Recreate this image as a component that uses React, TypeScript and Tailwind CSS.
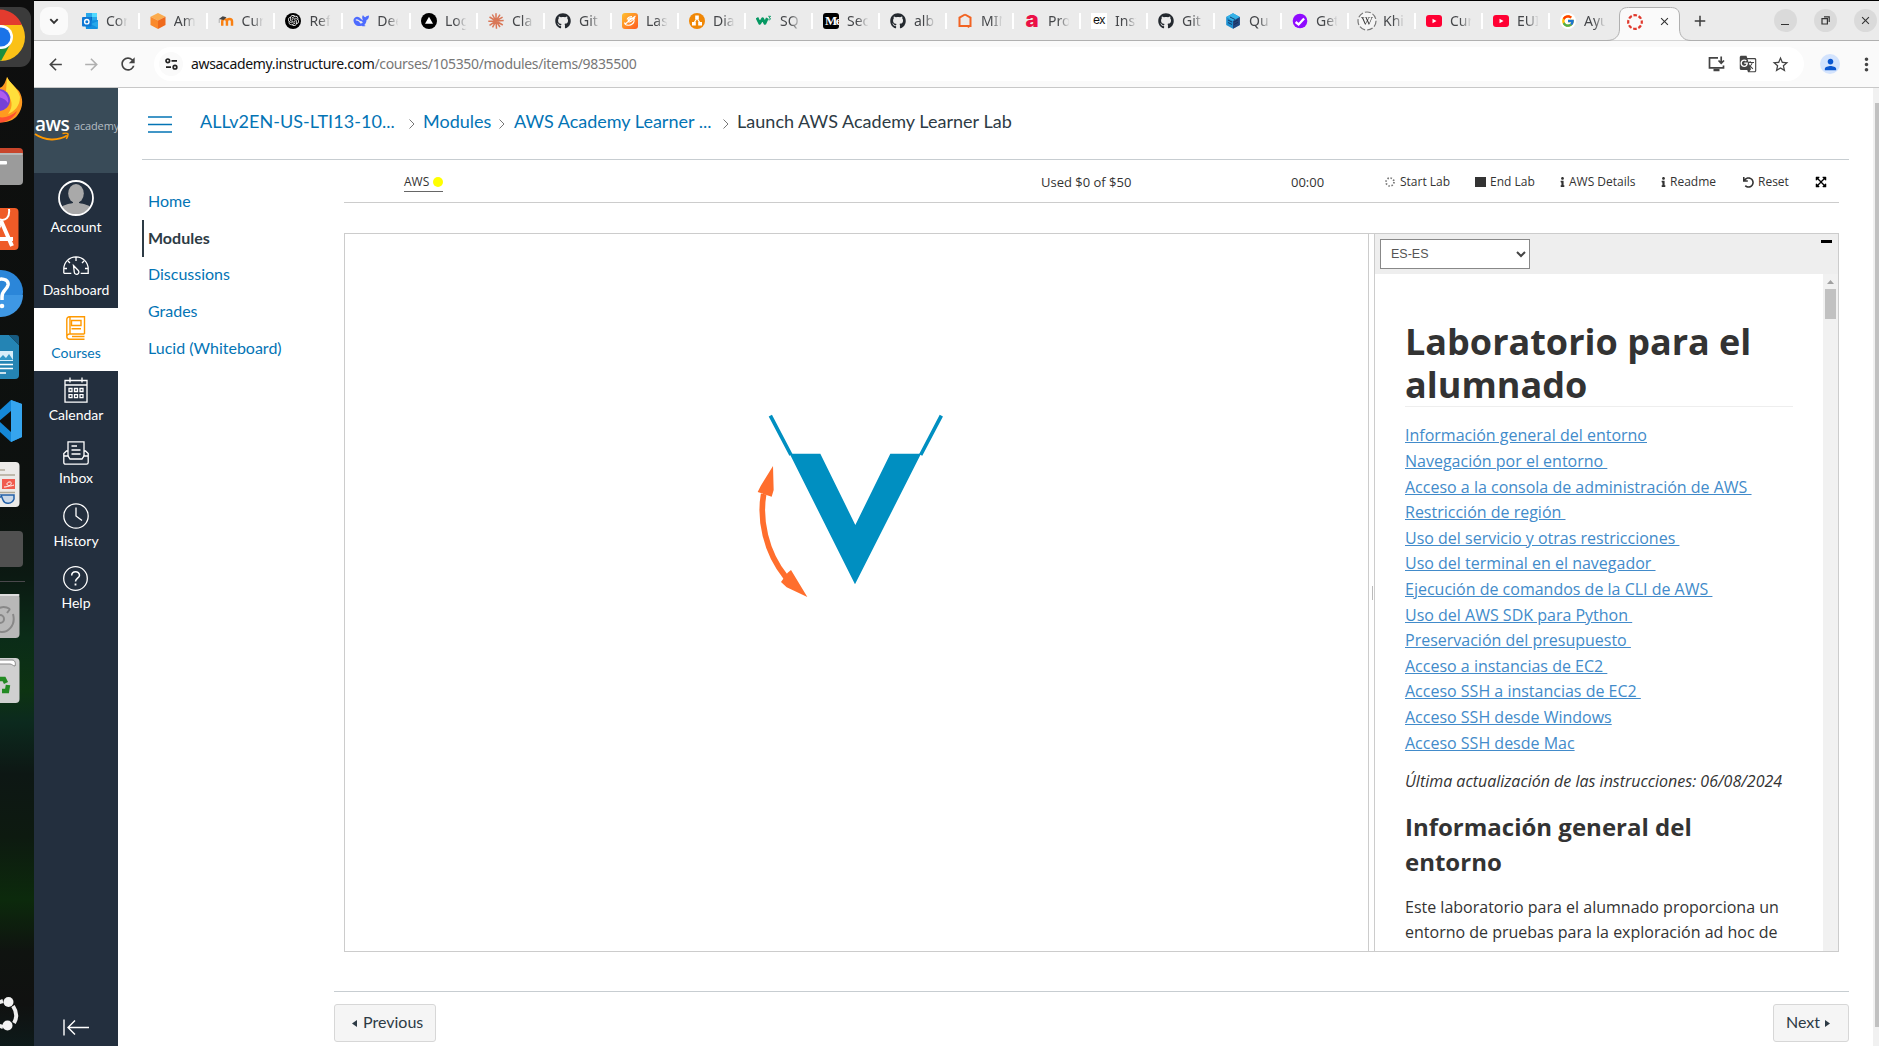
import React from 'react';
import { FaGithub, FaUndo, FaExpandArrowsAlt, FaInfo, FaWikipediaW } from 'react-icons/fa';
import { FcGoogle } from 'react-icons/fc';
import { SiOpenai } from 'react-icons/si';
import { MdArrowBack, MdArrowForward, MdRefresh, MdStarBorder, MdGTranslate, MdPerson, MdClose, MdAdd, MdMoreVert } from 'react-icons/md';

/* ---------- favicons ---------- */
const Outlook = () => (
  <svg width="16" height="16" viewBox="0 0 16 16">
    <path d="M4 0h11v9H4z" fill="#28a8ea" /><path d="M10 0h5v4h-5z" fill="#50d9ff" /><path d="M4 4h6v5H4z" fill="#0364b8" />
    <path d="M3 8l13-1v8a1 1 0 0 1-1 1H4z" fill="#1490df" /><path d="M16 8v7L9 11z" fill="#28a8ea" />
    <rect y="4" width="9.5" height="9.5" rx="1" fill="#0f78d4" /><circle cx="4.8" cy="8.7" r="2.2" fill="none" stroke="#fff" strokeWidth="1.4" />
  </svg>
);
const Cube = () => (
  <svg width="16" height="16" viewBox="0 0 16 16">
    <path d="M8 0l7.5 3.7L8 7.6.5 3.7z" fill="#fbac4f" /><path d="M.5 3.7L8 7.6V16L.5 12z" fill="#fa8a2c" /><path d="M15.5 3.7L8 7.6V16l7.5-4z" fill="#ef6a1c" />
  </svg>
);
const Moodle = () => (
  <svg width="17" height="16" viewBox="0 0 17 16" fill="none">
    <path d="M4.5 13V8.5a2.2 2.2 0 0 1 5 0V13m0-4.5a2.4 2.4 0 0 1 5.4 0V13" stroke="#f98012" strokeWidth="2.6" />
    <path d="M1 6l4-3 4 1-3 3z" fill="#444" /><path d="M1.3 6v4" stroke="#999" strokeWidth=".8" />
  </svg>
);
const OpenAi = () => <span className="flex h-4 w-4 items-center justify-center rounded-full bg-black text-white"><SiOpenai size={11} /></span>;
const Deepseek = () => (
  <svg width="17" height="14" viewBox="0 0 17 14">
    <path d="M.5 6C1 3 4 1.6 6.4 3c1.500 .9 3 2.600 4.200 3.600C9.500 4 9.500 2 10.700.7c.5 1.500 1.500 2 2.500 2.300C14 2 15.500 1.400 17 1.200c0 2.500-1 4.300-2.600 4.800-.2 2.600-1.200 4.300-2.500 5.300.5.500 1 .7 1.600 1-2 .7-3.400.3-4.500-.3C5 13.500.5 11 .5 6z" fill="#4d6bfe" />
    <path d="M3 6c2-.6 4 1 5.800 3.500M8 7.200l2 1.600" stroke="#ebebeb" strokeWidth="1.300" fill="none" />
  </svg>
);
const Vercel = () => (
  <svg width="16" height="16" viewBox="0 0 16 16"><circle cx="8" cy="8" r="8" /><path d="M8 3.800l4 6.900H4z" fill="#fff" /></svg>
);
const Claude = () => (
  <svg width="16" height="16" viewBox="0 0 16 16" stroke="#d97757" strokeWidth="1.500">
    <path d="M8 8V.3M8 8l4-6.300M8 8l6.600-3.800M8 8l7.700-.4M8 8l6.800 4M8 8l4 6M8 8l.5 7.800M8 8l-3.500 6.300M8 8l-6.500 4.300M8 8L.3 8.300M8 8L1.500 4M8 8L4.300 1.500" />
  </svg>
);
const Github = () => <FaGithub size={16} color="#24292f" />;
const Lastfm = () => (
  <svg width="16" height="16" viewBox="0 0 16 16">
    <defs><linearGradient id="lg" x2="1" y2="1"><stop stopColor="#ffc02e" /><stop offset="1" stopColor="#ff5a1f" /></linearGradient></defs>
    <rect width="16" height="16" rx="3" fill="url(#lg)" />
    <path d="M2.500 9.500c.5 4 8 3.500 9.500-1 .8-3-2-4-4-3S5.500 9 7.500 9s3-2 5.500-4.500M3 11.500C5 9 8 7 13.500 3M5 6.500c1-2 3-3 5-3" fill="none" stroke="#fff" strokeWidth="1.100" />
  </svg>
);
const Drawio = () => (
  <svg width="16" height="16" viewBox="0 0 16 16">
    <circle cx="8" cy="8" r="8" fill="#f08705" /><path d="M8 5L5 10M8 5l3 5" stroke="#fff" strokeWidth="1.300" />
    <path d="M6.200 2.500h3.600v3.600H6.200zM3 9h3.800v3.400H3zM9.200 9H13v3.400H9.200z" fill="#fff" />
  </svg>
);
const W3 = () => (
  <svg width="17" height="12" viewBox="0 0 17 12" fill="none" stroke="#059862">
    <path d="M1 2.500l3 6 3-5 2.500 5L12 3" strokeWidth="3" strokeLinejoin="round" /><path d="M13 1h2.500L14 2.700c2 0 2 2.500-.8 2" strokeWidth="1" />
  </svg>
);
const Medium = () => <span className="flex h-4 w-4 items-center overflow-hidden rounded-[3px] bg-black pl-0.5 font-['Liberation_Serif',serif] text-[13px] leading-4 font-bold tracking-[-1.500px] text-white">Me</span>;
const Minecraft = () => (
  <svg width="16" height="16" viewBox="0 0 16 16" fill="none"><path d="M8 1.500l5.500 3.200V13H11l1 1.500M8 1.500L2.500 4.700V13h9" stroke="#f26322" strokeWidth="2" /></svg>
);
const LetterA = () => <span className="flex h-4 w-4 items-center justify-center font-['Inter',sans-serif] text-[22px] leading-none font-black text-[#eb1046]"><span className="-mt-1">a</span></span>;
const Ex = () => <span className="flex h-4 w-4 items-center justify-center bg-white font-['Inter',sans-serif] text-[12px] leading-none tracking-tighter text-[#111]"><span className="-mt-0.5">ex</span></span>;
const Hex = () => (
  <svg width="16" height="16" viewBox="0 0 16 16">
    <path d="M8 .3l6.800 3.800v7.800L8 15.700l-6.800-3.800V4.100z" fill="#1d8fd0" /><path d="M8 .3l6.800 3.800L8 8 1.200 4.100z" fill="#35b2e8" /><path d="M14.800 4.100v7.800L8 15.700V8z" fill="#24447c" />
    <path d="M3 7l4 2M3 9.500l4 2M9 9l4-2.200M9 11.500l4-2.200M5 4l5 2.500" stroke="#12305c" strokeWidth=".9" />
  </svg>
);
const Check = () => (
  <svg width="16" height="16" viewBox="0 0 16 16"><circle cx="8" cy="8" r="7.300" fill="#8f0aff" /><path d="M3.600 9l3 2.500 5.500-6" stroke="#fff" strokeWidth="2.300" fill="none" /></svg>
);
const Wiki = () => (
  <span className="relative flex h-5 w-5 shrink-0 items-center justify-center text-[#333]">
    <svg className="absolute inset-0" width="20" height="20" viewBox="0 0 20 20"><circle cx="10" cy="10" r="9" fill="#f5f5f5" stroke="#777" strokeWidth="1.200" strokeDasharray="6 2" /></svg>
    <FaWikipediaW size={12} className="relative" />
  </span>
);
const Youtube = () => (
  <svg width="16" height="12" viewBox="0 0 16 12"><rect width="16" height="12" rx="3" fill="#ff0033" /><path d="M6.500 3.700v4.600l4-2.300z" fill="#fff" /></svg>
);
const Google = () => <span className="flex h-4 w-4 items-center justify-center rounded-full bg-white"><FcGoogle size={14} /></span>;

const tabs: [React.FC, string][] = [
  [Outlook, 'Cor'], [Cube, 'Am'], [Moodle, 'Cur'], [OpenAi, 'Ref'], [Deepseek, 'Dee'], [Vercel, 'Log'], [Claude, 'Cla'], [Github, 'Git'],
  [Lastfm, 'Las'], [Drawio, 'Dia'], [W3, 'SQ'], [Medium, 'Sec'], [Github, 'alb'], [Minecraft, 'MIN'], [LetterA, 'Pro'], [Ex, 'Inst'],
  [Github, 'Git'], [Hex, 'Qu'], [Check, 'Get'], [Wiki, 'Khi'], [Youtube, 'Cur'], [Youtube, 'EUI'], [Google, 'Ayu'],
];

function TabStrip() {
  return (
    <div className="flex h-[40px] shrink-0 border-b border-[#b0b0b0] bg-[#ebebeb]">
      <div className="mt-1.5 ml-1.5 flex h-7 w-7 shrink-0 items-center justify-center rounded-[9px] bg-[#fafafa]">
        <svg width="10" height="7" viewBox="0 0 10 7" fill="none" stroke="#333" strokeWidth="1.900"><path d="M1.300 1.200L5 5l3.700-3.800" /></svg>
      </div>
      <div className="ml-[4px] flex">
        {tabs.map(([Icon, label], i) => (
          <div key={i} className={`${i < 5 ? 'w-[67.800px]' : 'w-[67px]'} relative flex h-full shrink-0 items-center pl-[10px]`}>
            <span className="flex w-4 shrink-0 justify-center"><Icon /></span>
            <span className="ml-2 w-[22px] overflow-hidden font-['Noto_Sans',sans-serif] text-[14px] whitespace-nowrap text-[#45474a] [mask-image:linear-gradient(to_right,black_45%,transparent_98%)]">{label}</span>
            {i < 22 && <span className="absolute top-3 right-0 h-4 w-0.5 bg-white" />}
          </div>
        ))}
      </div>
      <div className="relative -ml-[10px] h-[40px] w-[84px] shrink-0">
        <svg className="absolute inset-0" width="84" height="40" viewBox="0 0 84 40">
          <path d="M0 39.500C8 39.500 12.500 35 12.500 28V15c0-6 3-8.500 9-8.500h42c6 0 9 2.500 9 8.500v13c0 7 4.500 11.500 11.500 11.500" fill="#fafafa" stroke="#b0b0b0" />
        </svg>
        <div className="relative flex h-full items-center pt-px pl-5">
          <svg width="16" height="16" viewBox="0 0 16 16" fill="none"><circle cx="8" cy="8" r="6.800" stroke="#e0382c" strokeWidth="2.200" strokeDasharray="3.600 1.740" strokeDashoffset="1.800" /></svg>
          <MdClose size={13} color="#333" className="ml-[15px]" />
        </div>
      </div>
      <MdAdd size={18} color="#3c3c3c" className="mt-[11px] shrink-0" />
      <div className="ml-[65px] flex shrink-0 items-center gap-[17px] text-[#333]">
        <span className="flex h-[23px] w-[23px] items-end justify-center rounded-full bg-[#dadada] pb-[7px]"><span className="h-[1.500px] w-2 bg-[#333]" /></span>
        <span className="flex h-[23px] w-[23px] items-center justify-center rounded-full bg-[#dadada]">
          <svg width="9" height="9" viewBox="0 0 9 9" fill="none" stroke="#333" strokeWidth="1.200"><path d="M1 2.600h5.400V8H1zM3 .8h5.200V6" /></svg>
        </span>
        <span className="flex h-[23px] w-[23px] items-center justify-center rounded-full bg-[#dadada]"><MdClose size={13} /></span>
      </div>
    </div>
  );
}

function AddressBar() {
  return (
    <div className="flex h-[47px] shrink-0 items-center overflow-hidden border-b border-[#c8c8c8] bg-[#fafafa] text-[#444]">
      <MdArrowBack size={19} className="ml-[12px] shrink-0" />
      <MdArrowForward size={19} className="ml-[17px] shrink-0 text-[#b0b0b0]" />
      <MdRefresh size={20} className="ml-[17px] shrink-0" />
      <div className="ml-4 flex h-[34px] w-[1650px] shrink-0 items-center rounded-full bg-white pl-[5px]">
        <span className="flex h-6 w-6 items-center justify-center rounded-full bg-[#fafafa]">
          <svg width="13" height="12" viewBox="0 0 13 12" fill="none" stroke="#222" strokeWidth="1.700"><circle cx="2.800" cy="2.800" r="1.800" /><path d="M6.500 2.800H12M1 9.200h5" /><circle cx="10" cy="9.200" r="1.800" /></svg>
        </span>
        <span className="ml-2 w-[445px] pb-0.5 font-['Noto_Sans',sans-serif] text-[14px] tracking-[-0.340px] whitespace-nowrap text-[#777]"><span className="text-[#111]">awsacademy.instructure.com</span>/courses/105350/modules/items/9835500</span>
        <svg className="ml-auto" width="17" height="16" viewBox="0 0 17 16" fill="none" stroke="#444" strokeWidth="1.700"><path d="M10 1.800H1.500v10h14V9.500" /><path d="M13.200.5v6M10.500 4.500l2.700 2.700L16 4.500" /><path d="M5.500 14h6" strokeWidth="2.500" /></svg>
        <MdGTranslate size={18} className="ml-[14px]" />
        <MdStarBorder size={19} className="mr-[14px] ml-[14px]" />
      </div>
      <span className="ml-4 flex h-5 w-5 shrink-0 items-center justify-center rounded-full bg-[#d3e3fd] text-[#0b57d0]"><MdPerson size={17} /></span>
      <MdMoreVert size={21} className="ml-[16px] shrink-0" />
    </div>
  );
}

/* ---------- desktop dock ---------- */
const Tile = ({ children }: { children: React.ReactNode }) => <svg className="shrink-0" width="34" height="64" viewBox="0 0 34 64">{children}</svg>;

function Dock() {
  return (
    <div className="flex h-full w-[34px] shrink-0 flex-col overflow-hidden bg-[linear-gradient(180deg,#0e0e0e_0%,#0d110f_48%,#0b1912_55%,#0b2c18_61%,#0d3312_66%,#0c2a1e_69%,#0d1714_74%,#0d1a10_80%,#0c2a0c_86%,#0f1310_91%,#101110_96%,#0d1a1a_100%)] pt-[5px]">
      <Tile>
        <rect x="-30" y="2" width="61" height="60" rx="11" fill="#3b3b3b" />
        <circle cx="1" cy="32" r="24" fill="#fbc116" /><path d="M-23 20A24 24 0 0 1 21.800 20z" fill="#e33b2e" /><path d="M-20 40L1 56l11-20-12-6z" fill="#1e8e3e" />
        <circle cx="1" cy="32" r="12" fill="#fff" /><circle cx="1" cy="32" r="9.500" fill="#1a73e8" />
      </Tile>
      <Tile>
        <path d="M-10 14C0 22 3 20 7 8c3 6 8 10 12 14 5 8 4 18-2 25-6 7-18 8-27 4z" fill="#ff9a1f" />
        <path d="M7 8c3 7 10 9 13 20 0 9-6 15-12 17 6-8 4-15-2-22z" fill="#ffdf3b" /><path d="M-10 42c6 9 18 8 27 0-3 9-17 15-27 10z" fill="#ff5030" />
        <circle cx="-1" cy="31" r="11" fill="#7540d8" /><path d="M-8 22C0 18 10 26 8 34 4 28-1 28-8 28z" fill="#b05cf0" />
      </Tile>
      <Tile>
        <rect x="-20" y="15" width="43" height="26" rx="4" fill="#c8452b" /><rect x="-20" y="20" width="43" height="32" rx="4" fill="#9b9b9b" /><rect x="-20" y="20" width="43" height="2" rx="1" fill="#b8b8b8" /><rect x="-5" y="28" width="12" height="3.500" rx="1" fill="#fff" />
      </Tile>
      <Tile>
        <rect x="-20" y="11" width="38.500" height="42" rx="4" fill="#ef5b27" /><path d="M-2 22c8 3 12-2 11-10" fill="none" stroke="#fff" strokeWidth="2" />
        <path d="M-4 26h6l10 23M-8 42h21" fill="none" stroke="#fff" strokeWidth="4" /><path d="M0 28l-6 14" stroke="#fff" strokeWidth="3" />
      </Tile>
      <Tile>
        <circle cx="1" cy="31" r="22" fill="#2b86d9" /><path d="M-21 34h44a22 22 0 0 1-44 0z" fill="#3e97e4" />
        <path d="M-5 21c5-5 14-3 13 3-1 5-6 5-6 12v3" fill="none" stroke="#fff" strokeWidth="3.500" /><circle cx="2" cy="45" r="2.300" fill="#fff" />
      </Tile>
      <Tile>
        <path d="M-20 10H9l10 10v30a4 4 0 0 1-4 4h-35z" fill="#2484b4" /><path d="M9 10h7a3 3 0 0 1 3 3v7z" fill="#175a80" />
        <rect x="-2" y="26" width="15" height="10" fill="#d8eefa" /><path d="M-2 35l5-5 3 3 3-4 4 6z" fill="#3498c8" /><path d="M-5 39.500h18M-5 43.500h18M-5 48h11" stroke="#fff" strokeWidth="1.700" />
      </Tile>
      <Tile>
        <path d="M11 11l11 4v33l-11 5-20-18v-6z" fill="#1588d8" /><path d="M11 11l11 4v33l-11 5z" fill="#36a5ee" /><path d="M11 22v21L-1 32z" fill="#0e0f0e" />
      </Tile>
      <Tile>
        <rect x="-20" y="9" width="39.500" height="45" rx="4" fill="#eceae8" /><path d="M-5 17H5M-5 22h20M-5 39.500h20" stroke="#b0a998" strokeWidth="1.500" />
        <rect x="2" y="26" width="13" height="10" fill="#f15b4f" /><path d="M4 34c8 0 9-6 5-5s-2 6 5 3" fill="none" stroke="#fff" />
        <path d="M1 42h13v4c-2 5-9 6-11 1zM1 44h-4" fill="#cbd8e8" stroke="#2460a8" strokeWidth="1.500" />
      </Tile>
      <Tile><rect x="-20" y="14" width="43" height="36" rx="4" fill="#505050" /></Tile>
      <div className="mb-[3px] h-px w-[25px] shrink-0 bg-[#4a484c]" />
      <Tile>
        <rect x="-20" y="9" width="39.500" height="44" rx="4" fill="#b8b8b8" /><rect x="-20" y="9" width="39.500" height="2" rx="1" fill="#ddd" />
        <path d="M-3 46C8 50 16 40 13 29M10 24C3 20-3 23-4 27M10 24l-3 4" fill="none" stroke="#888" strokeWidth="2" /><circle cx="0" cy="34" r="4" fill="none" stroke="#888" strokeWidth="2" />
      </Tile>
      <Tile>
        <rect x="-20" y="9" width="39.500" height="45" rx="4" fill="#d0d0d0" /><path d="M-5 11h17c3 0 4 3 3 6-2 0-3-2-5-2H-5z" fill="#fff" stroke="#888" />
        <path d="M0 30h4l2 4M8 36l-1 6H2M-3 44l-3-5" fill="none" stroke="#238a23" strokeWidth="4.500" />
      </Tile>
      <div className="mt-auto h-16"><Tile>
        <g fill="none" stroke="#eee"><path d="M-6 22l9-3M13 24c4 6 4 12 1 17M-6 42l9 3" strokeWidth="4" /></g>
        <circle cx="8.500" cy="20" r="5" fill="#f3f3f3" /><circle cx="7.500" cy="43.500" r="5" fill="#f3f3f3" />
      </Tile></div>
    </div>
  );
}

/* ---------- global navigation ---------- */
const line = { fill: 'none', stroke: '#fff', strokeWidth: 1.3 };
const AccountIcon = () => (
  <svg width="36" height="36" viewBox="0 0 36 36">
    <defs><clipPath id="av"><circle cx="18" cy="18" r="16.500" /></clipPath></defs>
    <g clipPath="url(#av)"><rect width="36" height="36" fill="#232f3e" /><ellipse cx="18" cy="13.500" rx="7.800" ry="9.500" fill="#a9a9a9" /><path d="M15 20h6v3c5 1 11 2 13 6v8H2v-8c2-4 8-5 13-6z" fill="#a9a9a9" /></g>
    <circle cx="18" cy="18" r="17" fill="none" stroke="#fff" strokeWidth="1.800" />
  </svg>
);
const DashboardIcon = () => (
  <svg width="26" height="19" viewBox="0 0 26 19" {...line}>
    <path d="M.8 17.300V13a12.200 12.200 0 0 1 24.400 0v4.300h-7.500M8.300 17.300H.8M13 1v4M5 5l2 2M21 5l-2 2M1.500 12.500H4M22 12.500h2.500" />
    <path d="M10.500 9.500l4.800 5a2.300 2.300 0 1 1-4 1.800z" />
  </svg>
);
const CoursesIcon = () => (
  <svg width="20" height="24" viewBox="0 0 20 24" fill="none" stroke="#f90" strokeWidth="1.400">
    <path d="M18.500 18V.8H3.500A2.700 2.700 0 0 0 .8 3.500v17a2.700 2.700 0 0 0 2.700 2.700h15M18.500 18H3.500a2.500 2.500 0 0 0-2.600 2.500M4 .8V18" /><path d="M5.500 4.500H15v5H5.500zM5.500 12.800H15M18.500 20.500H6" />
  </svg>
);
const CalendarIcon = () => (
  <svg width="24" height="26" viewBox="0 0 24 26" {...line}><path d="M1 3.500h22v21.700H1zM1 8h22M6 .5v5M18 .5v5" /><path d="M5 11.500h3v3H5zM10.500 11.500h3v3h-3zM16 11.500h3v3h-3zM5 17.700h3v3H5zM10.500 17.700h3v3h-3zM16 17.700h3v3h-3z" /></svg>
);
const InboxIcon = () => (
  <svg width="26" height="24" viewBox="0 0 26 24" {...line}><path d="M5 15V.8h16V15M8.500 5H14M8.500 9h9M8.500 13h9" /><path d="M5 10H3.500L.8 12.500V21.500a1.700 1.700 0 0 0 1.700 1.700h21a1.700 1.700 0 0 0 1.700-1.700v-9L22.500 10H21M.8 15H5l2 3h12l2-3h4.200" /></svg>
);
const HistoryIcon = () => <svg width="26" height="26" viewBox="0 0 26 26" {...line}><circle cx="13" cy="13" r="12.200" /><path d="M13 4.500V13l6 4.500" /></svg>;
const HelpIcon = () => <svg className="mr-px" width="25" height="25" viewBox="0 0 25 25" {...line}><circle cx="12.500" cy="12.500" r="11.800" /><path d="M8.700 9.500c0-5 7.800-5 7.800-.3 0 3-4 3-4 6.300" strokeWidth="1.500" /><path d="M12.500 17.500v2" strokeWidth="1.800" /></svg>;

const navItems: [React.FC, string][] = [[DashboardIcon, 'Dashboard'], [CoursesIcon, 'Courses'], [CalendarIcon, 'Calendar'], [InboxIcon, 'Inbox'], [HistoryIcon, 'History'], [HelpIcon, 'Help']];

function GlobalNav() {
  return (
    <nav className="flex w-[84px] shrink-0 flex-col items-center bg-[#232f3e] font-['Lato',sans-serif] text-[14px] text-white">
      <div className="flex h-[85px] w-full shrink-0 items-start overflow-hidden bg-[#394b58] pt-7">
        <div className="w-10 shrink-0">
          <div className="pl-px font-['Open_Sans',sans-serif] text-[19px] leading-[16px] font-semibold tracking-[-0.500px]">aws</div>
          <svg width="37" height="11" viewBox="0 0 37 11" fill="none" stroke="#f90" strokeWidth="1.900"><path d="M1 2c10 7 23 7 32 1.500" /><path d="M28.500 1.500c6-1 7-.3 3.800 5.500" strokeWidth="1.500" /></svg>
        </div>
        <span className="mt-0.5 font-['Open_Sans',sans-serif] text-[11px] leading-4 tracking-[-0.150px] text-[#b4bcc2]">academy</span>
      </div>
      <div className="flex h-[72.500px] w-full shrink-0 flex-col items-center pt-[7px]">
        <AccountIcon /><span className="mt-0.5 leading-[18px]">Account</span>
      </div>
      {navItems.map(([Icon, label]) => (
        <div key={label} className={`flex h-[62.700px] w-full shrink-0 flex-col items-center ${label === 'Courses' ? 'bg-white text-[#0374b5]' : ''}`}>
          <span className="mt-[6px] flex h-[27px] items-center"><Icon /></span>
          <span className="mt-[2.400px] leading-[18px]">{label}</span>
        </div>
      ))}
      <svg className="mt-auto mb-[10px]" width="26" height="17" viewBox="0 0 26 17" fill="none" stroke="#fff" strokeWidth="1.400"><path d="M1 .5v16M26 8.500H5M12 1.500L5 8.500l7 7" /></svg>
    </nav>
  );
}

const Chevron = () => <svg className="mt-1" width="6" height="10" viewBox="0 0 6 10" fill="none" stroke="#777"><path d="M.5.5L5 5 .5 9.500" /></svg>;

const links = [
  'Información general del entorno', 'Navegación por el entorno\u00a0', 'Acceso a la consola de administración de AWS\u00a0', 'Restricción de región\u00a0',
  'Uso del servicio y otras restricciones\u00a0', 'Uso del terminal en el navegador\u00a0', 'Ejecución de comandos de la CLI de AWS\u00a0', 'Uso del AWS SDK para Python\u00a0',
  'Preservación del presupuesto\u00a0', 'Acceso a instancias de EC2\u00a0', 'Acceso SSH a instancias de EC2\u00a0', 'Acceso SSH desde Windows', 'Acceso SSH desde Mac',
];

function LabToolbar() {
  return (
    <div className="grid h-[43px] w-[1495px] grid-cols-[637px_250px_94px_90px_85px_101px_82px_72px_24px] items-center border-b border-[#ccc] pt-0.5 pl-[60px] font-['Open_Sans',sans-serif] text-[12px] whitespace-nowrap text-[#333]">
      <span className="flex h-[19px] w-[39px] items-center justify-between border-b border-[#666]">AWS<span className="h-[10px] w-[10px] rounded-full bg-[#ff0]" /></span>
      <span className="pt-px text-[13px]">Used $0 of $50</span>
      <span className="pt-px text-[13px]">00:00</span>
      <span className="flex items-center gap-[5px]"><svg width="10" height="10" viewBox="0 0 10 10" fill="none"><circle cx="5" cy="5" r="4" stroke="#777" strokeWidth="1.700" strokeDasharray="1.500 1.640" /></svg>Start Lab</span>
      <span className="flex items-center gap-1"><span className="h-[10px] w-[11px] bg-[#333]" />End Lab</span>
      <span className="flex items-center gap-[3px]"><FaInfo size={10} className="-ml-px w-[7px]" />AWS Details</span>
      <span className="flex items-center gap-[3px]"><FaInfo size={10} className="-ml-px w-[7px]" />Readme</span>
      <span className="flex items-center gap-1"><FaUndo size={11} />Reset</span>
      <FaExpandArrowsAlt size={12} color="#000" />
    </div>
  );
}

function Instructions() {
  return (
    <section className="flex w-[464px] flex-col border-l border-[#ccc]">
      <div className="flex h-10 shrink-0 justify-between bg-[#eee] pt-[5px] pr-[6px] pl-[5px]">
        <div className="flex h-[30px] w-[150px] items-center justify-between border border-[#888] bg-white pr-[3px] pl-[10px] font-['Liberation_Sans',sans-serif] text-[12.500px] text-[#555]">
          ES-ES
          <svg width="10" height="7" viewBox="0 0 10 7" fill="none" stroke="#444" strokeWidth="2"><path d="M1 1l4 4 4-4" /></svg>
        </div>
        <span className="mt-px h-[3px] w-[11px] bg-black" />
      </div>
      <div className="flex min-h-0 flex-1">
        <div className="flex-1 overflow-hidden pr-[30px] pl-[30px] font-['Open_Sans',sans-serif] text-[16px] leading-[25.600px] whitespace-nowrap text-[#333]">
          <h1 className="mt-[46px] border-b border-[#eee] text-[36px] leading-[43px] font-bold">Laboratorio para el<br />alumnado</h1>
          <div className="mt-[16.400px] text-[#428bca]">
            {links.map((l) => <div key={l}><a className="underline">{l}</a></div>)}
          </div>
          <p className="mt-[12.900px] italic">Última actualización de las instrucciones: 06/08/2024</p>
          <h2 className="mt-[14px] text-[24px] leading-[35px] font-bold">Información general del<br />entorno</h2>
          <p className="mt-[16.200px]">Este laboratorio para el alumnado proporciona un<br />entorno de pruebas para la exploración ad hoc de</p>
        </div>
        <div className="flex w-[15px] shrink-0 flex-col items-center bg-[#f1f1f1] pt-1.5">
          <svg width="7" height="4" viewBox="0 0 7 4"><path d="M3.500 0L7 4H0z" fill="#a0a0a0" /></svg>
          <div className="mt-[5px] h-[30px] w-[11px] bg-[#c1c1c1]" />
        </div>
      </div>
    </section>
  );
}

function CoursePage() {
  return (
    <main className="flex min-w-0 flex-1 bg-white">
      <div className="w-[1731px] shrink-0 pl-6 font-['Lato',sans-serif]">
        <header className="flex h-[72px] items-center border-b border-[#c7cdd1] pb-1 text-[18px] whitespace-nowrap text-[#0374b5]">
          <svg className="mt-1.5 ml-[6px]" width="24" height="17" viewBox="0 0 24 17" stroke="#0374b5" strokeWidth="1.500"><path d="M0 1h24M0 8.500h24M0 16h24" /></svg>
          <span className="ml-7 w-[209px] tracking-[0.050px]">ALLv2EN-US-LTI13-10...</span><Chevron />
          <span className="ml-[8px] w-[76px]">Modules</span><Chevron />
          <span className="ml-[9px] w-[209px]">AWS Academy Learner ...</span><Chevron />
          <span className="ml-2 tracking-[0.030px] text-[#2d3b45]">Launch AWS Academy Learner Lab</span>
        </header>
        <div className="flex">
          <aside className="flex w-[192px] shrink-0 flex-col pt-[23.500px] text-[16px] text-[#0374b5]">
            {['Home', 'Modules', 'Discussions', 'Grades', 'Lucid (Whiteboard)'].map((t) => (
              <a key={t} className={`flex h-[36.700px] items-center pb-[2px] ${t === 'Modules' ? 'border-l-2 border-[#2d3b45] pl-1 font-bold text-[#2d3b45]' : 'pl-1.5'}`}>{t}</a>
            ))}
          </aside>
          <div className="w-[1515px]">
            <div className="pl-[10px]">
              <LabToolbar />
              <div className="mt-[30px] flex h-[719px] w-[1495px] border border-[#ccc]">
                <div className="w-[1024px] shrink-0 border-r border-[#ccc]">
                  <svg className="mt-[166px] ml-[395px]" width="220" height="210" viewBox="0 0 660 630">
                    <path d="M149 161h92l105 214 105-214h92L345 553z" fill="#008fc1" /><path d="M91 47l62 118M604 47l-62 118" stroke="#008fc1" strokeWidth="11" />
                    <path d="M71 282C58 355 75 455 138 532" fill="none" stroke="#ff6e2d" strokeWidth="17" /><path d="M99 198l-37 60-9 18 42 14 6-20zM202 591l-49-81-10 8-20 28 17 16z" fill="#ff6e2d" />
                  </svg>
                </div>
                <div className="flex w-[5px] shrink-0 items-center pl-[3px]"><span className="h-[14px] w-px bg-[#bbb]" /></div>
                <Instructions />
              </div>
            </div>
            <footer className="mt-[39px] flex justify-between border-t border-[#c7cdd1] pt-3 text-[16px] text-[#2d3b45]">
              <div className="flex h-[38px] w-[102px] items-center rounded-[3px] border border-[#d7d7d7] bg-[#f5f5f5] pb-0.5 pl-[17px]"><svg className="mt-0.5 mr-[6px]" width="5" height="7" viewBox="0 0 5 7"><path d="M5 0v7L0 3.500z" fill="#2d3b45" /></svg>Previous</div>
              <div className="flex h-[38px] w-[76px] items-center rounded-[3px] border border-[#d7d7d7] bg-[#f5f5f5] pb-0.5 pl-3">Next<svg className="mt-0.5 ml-[5px]" width="5" height="7" viewBox="0 0 5 7"><path d="M0 0v7l5-3.500z" fill="#2d3b45" /></svg></div>
            </footer>
          </div>
        </div>
      </div>
      <div className="ml-auto flex w-[6px] shrink-0 flex-col bg-[#f1f1f1] pt-[15px] pl-0.5"><div className="h-[924px] bg-[#c1c1c1]" /></div>
    </main>
  );
}

export default function App() {
  return (
    <div className="flex h-[1046px] w-[1879px] overflow-hidden bg-black">
      <Dock />
      <div className="flex w-[1845px] flex-col overflow-hidden pt-px">
        <TabStrip />
        <AddressBar />
        <div className="flex min-h-0 flex-1">
          <GlobalNav />
          <CoursePage />
        </div>
      </div>
    </div>
  );
}
